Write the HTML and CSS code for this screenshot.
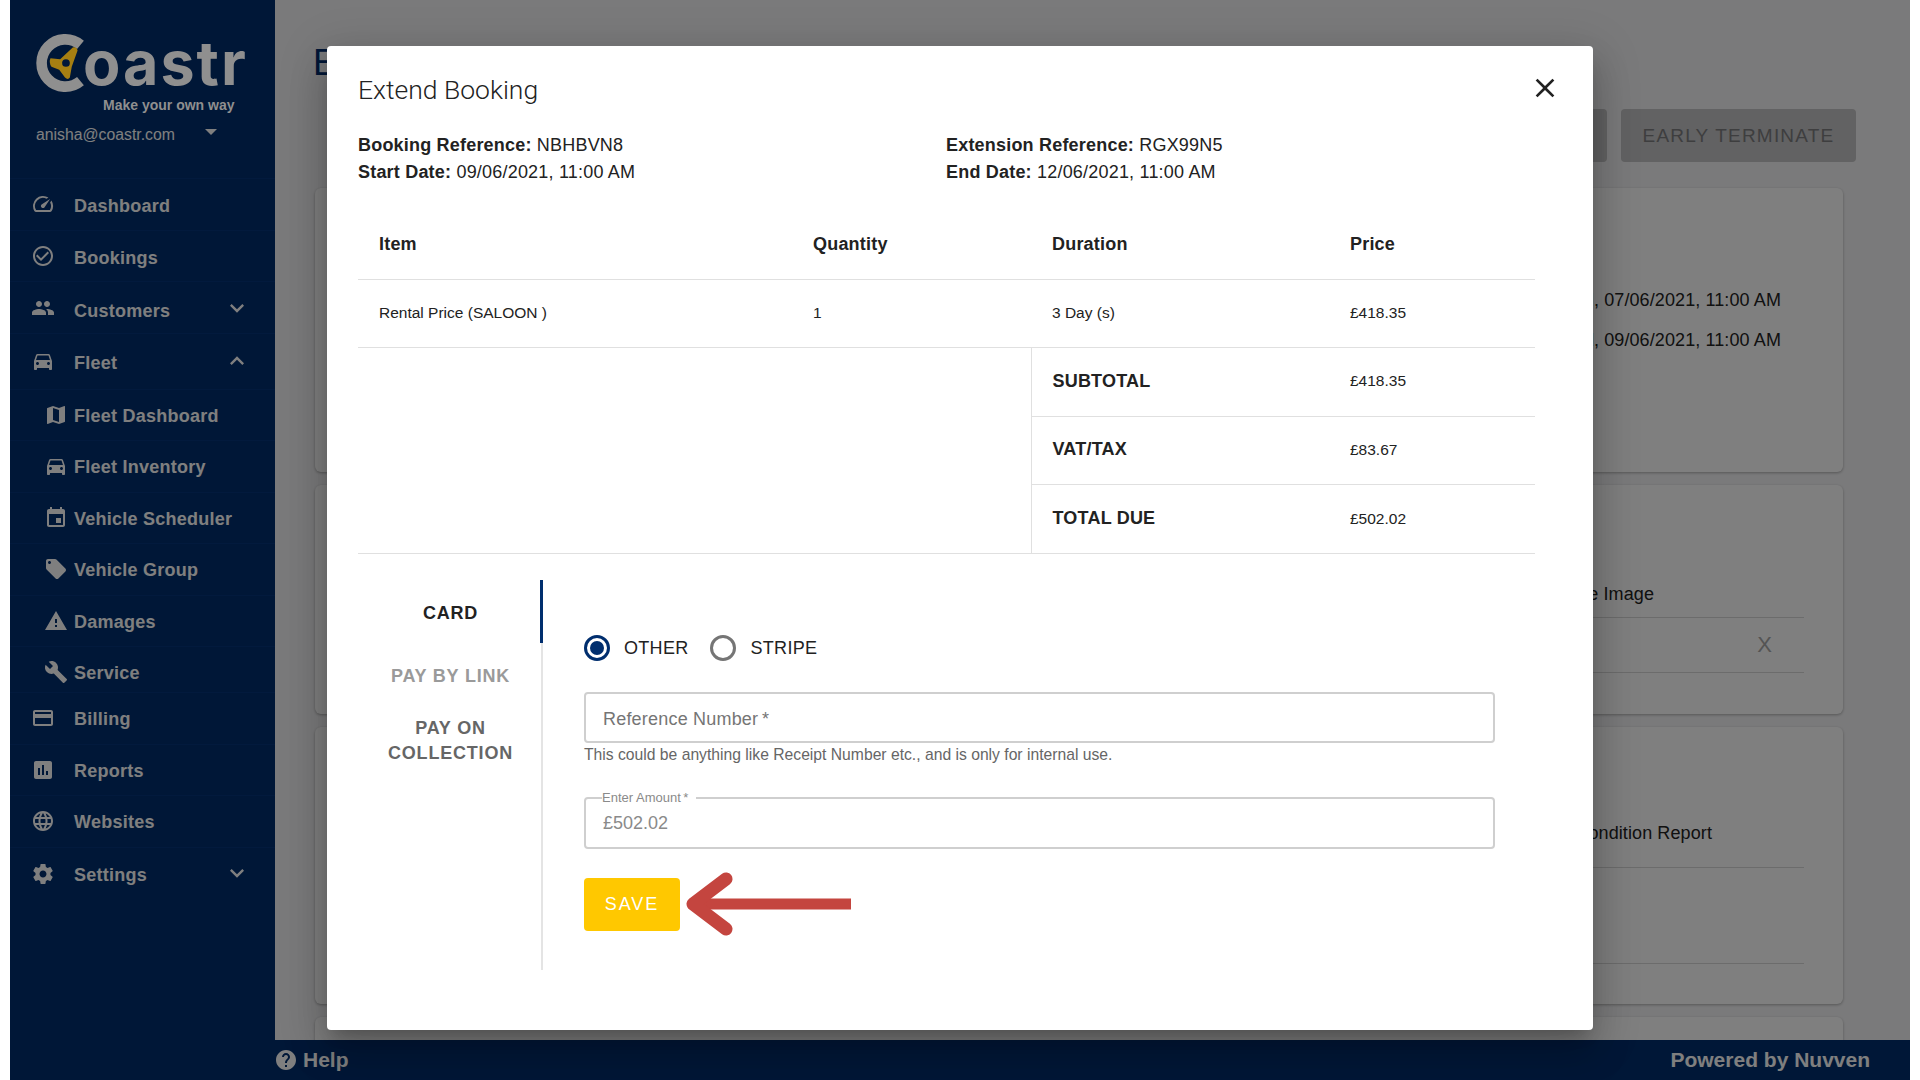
FILE: index.html
```html
<!DOCTYPE html>
<html lang="en">
<head>
    <meta charset="UTF-8">
    <title>Extend Booking</title>
    <link rel="stylesheet" href="styles.css">
</head>
<body>
    <svg class="sprite" xmlns="http://www.w3.org/2000/svg">
        <symbol id="i-speed" viewBox="0 0 24 24"><path d="M20.38 8.57l-1.23 1.85a8 8 0 0 1-.22 7.58H5.07A8 8 0 0 1 15.58 6.85l1.85-1.23A10 10 0 0 0 3.35 19a2 2 0 0 0 1.72 1h13.85a2 2 0 0 0 1.74-1 10 10 0 0 0-.27-10.44zm-9.79 6.84a2 2 0 0 0 2.83 0l5.66-8.49-8.49 5.66a2 2 0 0 0 0 2.83z"/></symbol>
        <symbol id="i-check" viewBox="0 0 24 24"><path d="M16.59 7.58L10 14.17l-3.59-3.58L5 12l5 5 8-8zM12 2C6.48 2 2 6.48 2 12s4.48 10 10 10 10-4.48 10-10S17.52 2 12 2zm0 18c-4.42 0-8-3.58-8-8s3.58-8 8-8 8 3.58 8 8-3.58 8-8 8z"/></symbol>
        <symbol id="i-people" viewBox="0 0 24 24"><path d="M16 11c1.66 0 2.99-1.34 2.99-3S17.66 5 16 5c-1.66 0-3 1.34-3 3s1.34 3 3 3zm-8 0c1.66 0 2.99-1.34 2.99-3S9.66 5 8 5C6.34 5 5 6.34 5 8s1.34 3 3 3zm0 2c-2.33 0-7 1.17-7 3.5V19h14v-2.5c0-2.33-4.67-3.5-7-3.5zm8 0c-.29 0-.62.02-.97.05 1.16.84 1.97 1.97 1.97 3.45V19h6v-2.5c0-2.33-4.67-3.5-7-3.5z"/></symbol>
        <symbol id="i-car" viewBox="0 0 24 24"><path d="M18.92 6.01C18.72 5.42 18.16 5 17.5 5h-11c-.66 0-1.21.42-1.42 1.01L3 12v8c0 .55.45 1 1 1h1c.55 0 1-.45 1-1v-1h12v1c0 .55.45 1 1 1h1c.55 0 1-.45 1-1v-8l-2.08-5.99zM6.5 16c-.83 0-1.5-.67-1.5-1.5S5.67 13 6.5 13s1.5.67 1.5 1.5S7.33 16 6.5 16zm11 0c-.83 0-1.5-.67-1.5-1.5s.67-1.5 1.5-1.5 1.5.67 1.5 1.5-.67 1.5-1.5 1.5zM5 11l1.5-4.5h11L19 11H5z"/></symbol>
        <symbol id="i-map" viewBox="0 0 24 24"><path d="M20.5 3l-.16.03L15 5.1 9 3 3.36 4.9c-.21.07-.36.25-.36.48V20.5c0 .28.22.5.5.5l.16-.03L9 18.9l6 2.1 5.64-1.9c.21-.07.36-.25.36-.48V3.5c0-.28-.22-.5-.5-.5zM15 19l-6-2.11V5l6 2.11V19z"/></symbol>
        <symbol id="i-event" viewBox="0 0 24 24"><path d="M17 12h-5v5h5v-5zM16 1v2H8V1H6v2H5c-1.11 0-1.99.9-1.99 2L3 19c0 1.1.89 2 2 2h14c1.1 0 2-.9 2-2V5c0-1.1-.9-2-2-2h-1V1h-2zm3 18H5V8h14v11z"/></symbol>
        <symbol id="i-tag" viewBox="0 0 24 24"><path d="M21.41 11.58l-9-9C12.05 2.22 11.55 2 11 2H4c-1.1 0-2 .9-2 2v7c0 .55.22 1.05.59 1.42l9 9c.36.36.86.58 1.41.58.55 0 1.05-.22 1.41-.59l7-7c.37-.36.59-.86.59-1.41 0-.55-.23-1.06-.59-1.42zM5.5 7C4.67 7 4 6.33 4 5.5S4.67 4 5.5 4 7 4.67 7 5.5 6.33 7 5.5 7z"/></symbol>
        <symbol id="i-warning" viewBox="0 0 24 24"><path d="M1 21h22L12 2 1 21zm12-3h-2v-2h2v2zm0-4h-2v-4h2v4z"/></symbol>
        <symbol id="i-build" viewBox="0 0 24 24"><path d="M22.7 19l-9.1-9.1c.9-2.3.4-5-1.5-6.9-2-2-5-2.4-7.4-1.3L9 6 6 9 1.6 4.7C.4 7.1.9 10.1 2.9 12.1c1.9 1.9 4.6 2.4 6.9 1.5l9.1 9.1c.4.4 1 .4 1.4 0l2.3-2.3c.5-.4.5-1.1.1-1.4z"/></symbol>
        <symbol id="i-card" viewBox="0 0 24 24"><path d="M20 4H4c-1.11 0-1.99.89-1.99 2L2 18c0 1.11.89 2 2 2h16c1.11 0 2-.89 2-2V6c0-1.11-.89-2-2-2zm0 14H4v-6h16v6zm0-10H4V6h16v2z"/></symbol>
        <symbol id="i-chart" viewBox="0 0 24 24"><path d="M19 3H5c-1.1 0-2 .9-2 2v14c0 1.1.9 2 2 2h14c1.1 0 2-.9 2-2V5c0-1.1-.9-2-2-2zM9 17H7v-7h2v7zm4 0h-2V7h2v10zm4 0h-2v-4h2v4z"/></symbol>
        <symbol id="i-globe" viewBox="0 0 24 24"><path d="M11.99 2C6.47 2 2 6.48 2 12s4.47 10 9.99 10C17.52 22 22 17.52 22 12S17.52 2 11.99 2zm6.93 6h-2.95c-.32-1.25-.78-2.45-1.38-3.56 1.84.63 3.37 1.91 4.33 3.56zM12 4.04c.83 1.2 1.48 2.53 1.91 3.96h-3.82c.43-1.43 1.08-2.76 1.91-3.96zM4.26 14C4.1 13.36 4 12.69 4 12s.1-1.36.26-2h3.38c-.08.66-.14 1.32-.14 2 0 .68.06 1.34.14 2H4.26zm.82 2h2.95c.32 1.25.78 2.45 1.38 3.56-1.84-.63-3.37-1.9-4.33-3.56zm2.95-8H5.08c.96-1.66 2.49-2.93 4.33-3.56C8.81 5.55 8.35 6.75 8.03 8zM12 19.96c-.83-1.2-1.48-2.53-1.91-3.96h3.82c-.43 1.43-1.08 2.76-1.91 3.96zM14.34 14H9.66c-.09-.66-.16-1.32-.16-2 0-.68.07-1.35.16-2h4.68c.09.65.16 1.32.16 2 0 .68-.07 1.34-.16 2zm.25 5.56c.6-1.11 1.06-2.31 1.38-3.56h2.95c-.96 1.65-2.49 2.93-4.33 3.56zM16.36 14c.08-.66.14-1.32.14-2 0-.68-.06-1.34-.14-2h3.38c.16.64.26 1.31.26 2s-.1 1.36-.26 2h-3.38z"/></symbol>
        <symbol id="i-gear" viewBox="0 0 24 24"><path d="M19.43 12.98c.04-.32.07-.64.07-.98s-.03-.66-.07-.98l2.11-1.65c.19-.15.24-.42.12-.64l-2-3.46c-.12-.22-.39-.3-.61-.22l-2.49 1c-.52-.4-1.08-.73-1.69-.98l-.38-2.65C14.46 2.18 14.25 2 14 2h-4c-.25 0-.46.18-.49.42l-.38 2.65c-.61.25-1.17.59-1.69.98l-2.49-1c-.23-.09-.49 0-.61.22l-2 3.46c-.13.22-.07.49.12.64l2.11 1.65c-.04.32-.07.65-.07.98s.03.66.07.98l-2.11 1.65c-.19.15-.24.42-.12.64l2 3.46c.12.22.39.3.61.22l2.49-1c.52.4 1.08.73 1.69.98l.38 2.65c.03.24.24.42.49.42h4c.25 0 .46-.18.49-.42l.38-2.65c.61-.25 1.17-.59 1.69-.98l2.49 1c.23.09.49 0 .61-.22l2-3.46c.12-.22.07-.49-.12-.64l-2.11-1.65zM12 15.5c-1.93 0-3.5-1.57-3.5-3.5s1.57-3.5 3.5-3.5 3.5 1.57 3.5 3.5-1.57 3.5-3.5 3.5z"/></symbol>
        <symbol id="i-help" viewBox="0 0 24 24"><path d="M12 2C6.48 2 2 6.48 2 12s4.48 10 10 10 10-4.48 10-10S17.52 2 12 2zm1 17h-2v-2h2v2zm2.07-7.75l-.9.92C13.45 12.9 13 13.5 13 15h-2v-.5c0-1.1.45-2.1 1.17-2.83l1.24-1.26c.37-.36.59-.86.59-1.41 0-1.1-.9-2-2-2s-2 .9-2 2H8c0-2.21 1.79-4 4-4s4 1.79 4 4c0 .88-.36 1.68-.93 2.25z"/></symbol>
        <symbol id="i-more" viewBox="0 0 24 24"><path d="M16.59 8.59L12 13.17 7.41 8.59 6 10l6 6 6-6z"/></symbol>
        <symbol id="i-less" viewBox="0 0 24 24"><path d="M12 8l-6 6 1.41 1.41L12 10.83l4.59 4.58L18 14z"/></symbol>
        <symbol id="i-close" viewBox="0 0 24 24"><path d="M19 6.41L17.59 5 12 10.59 6.41 5 5 6.41 10.59 12 5 17.59 6.41 19 12 13.41 17.59 19 19 17.59 13.41 12z"/></symbol>
    </svg>

    <div class="frame">
        <aside class="sidebar">
            <div class="brand">
                <div class="logo">
                    <svg class="logo_mark" viewBox="0 0 60 62">
                        <path class="logo_ring" d="M46 12.2 A24.5 24.5 0 1 0 46 49.8"/>
                        <path class="logo_wheel" d="M15 26 L25 27 L38 15 Q42 14 43 18 L37 35 L35 46 Q33 49 30 46 L24 38 L16 35 Q13 30 15 26z"/>
                        <circle class="logo_hole" cx="31" cy="31" r="4"/>
                    </svg>
                    <span class="logo_text">oastr</span>
                </div>
                <div class="tagline">Make your own way</div>
                <div class="account">
                    <span>anisha@coastr.com</span>
                    <span class="account_caret"></span>
                </div>
            </div>
            <nav class="nav">
                <a class="nav_item"><svg class="nav_icon"><use href="#i-speed"/></svg>Dashboard</a>
                <a class="nav_item"><svg class="nav_icon"><use href="#i-check"/></svg>Bookings</a>
                <a class="nav_item nav_low"><svg class="nav_icon"><use href="#i-people"/></svg>Customers<svg class="nav_chevron"><use href="#i-more"/></svg></a>
                <a class="nav_item nav_open"><svg class="nav_icon"><use href="#i-car"/></svg>Fleet<svg class="nav_chevron"><use href="#i-less"/></svg></a>
                <a class="nav_item nav_sub"><svg class="nav_icon"><use href="#i-map"/></svg>Fleet Dashboard</a>
                <a class="nav_item nav_sub"><svg class="nav_icon"><use href="#i-car"/></svg>Fleet Inventory</a>
                <a class="nav_item nav_sub"><svg class="nav_icon"><use href="#i-event"/></svg>Vehicle Scheduler</a>
                <a class="nav_item nav_sub"><svg class="nav_icon"><use href="#i-tag"/></svg>Vehicle Group</a>
                <a class="nav_item nav_sub"><svg class="nav_icon"><use href="#i-warning"/></svg>Damages</a>
                <a class="nav_item nav_sub nav_last"><svg class="nav_icon"><use href="#i-build"/></svg>Service</a>
                <a class="nav_item nav_flat"><svg class="nav_icon"><use href="#i-card"/></svg>Billing</a>
                <a class="nav_item nav_flat"><svg class="nav_icon"><use href="#i-chart"/></svg>Reports</a>
                <a class="nav_item nav_flat"><svg class="nav_icon"><use href="#i-globe"/></svg>Websites</a>
                <a class="nav_item nav_end"><svg class="nav_icon"><use href="#i-gear"/></svg>Settings<svg class="nav_chevron"><use href="#i-more"/></svg></a>
            </nav>
        </aside>

        <div class="main">
            <div class="content">
                <h1 class="page_title">E</h1>
                <div class="actions">
                    <button class="action_btn">EXTEND</button>
                    <button class="action_btn">EARLY TERMINATE</button>
                </div>
                <section class="card card_dates">
                    <p class="card_line">Started, 07/06/2021, 11:00 AM</p>
                    <p class="card_line">Ended, 09/06/2021, 11:00 AM</p>
                </section>
                <section class="card card_image">
                    <div class="card_row card_row_head">Vehicle Image</div>
                    <div class="card_row card_row_x">X</div>
                </section>
                <section class="card card_report">
                    <div class="card_row card_row_report">Vehicle Condition Report</div>
                    <div class="card_row card_row_empty"></div>
                </section>
                <section class="card card_more"></section>
            </div>
            <footer class="footer">
                <div class="footer_help"><svg class="footer_icon"><use href="#i-help"/></svg>Help</div>
                <div>Powered by Nuvven</div>
            </footer>
        </div>

        <div class="overlay">
            <div class="modal">
                <div class="modal_head">
                    <h2 class="modal_title">Extend Booking</h2>
                    <svg class="modal_close"><use href="#i-close"/></svg>
                </div>
                <div class="summary">
                    <div>
                        <p><b>Booking Reference:</b> NBHBVN8</p>
                        <p><b>Start Date:</b> 09/06/2021, 11:00 AM</p>
                    </div>
                    <div>
                        <p><b>Extension Reference:</b> RGX99N5</p>
                        <p><b>End Date:</b> 12/06/2021, 11:00 AM</p>
                    </div>
                </div>

                <table class="price_table">
                    <colgroup>
                        <col class="col_item"><col class="col_qty"><col class="col_dur"><col class="col_price">
                    </colgroup>
                    <thead>
                        <tr><th>Item</th><th>Quantity</th><th>Duration</th><th>Price</th></tr>
                    </thead>
                    <tbody>
                        <tr class="row_first"><td>Rental Price (SALOON )</td><td>1</td><td>3 Day (s)</td><td>£418.35</td></tr>
                        <tr><td class="blank" colspan="2" rowspan="3"></td><th>SUBTOTAL</th><td>£418.35</td></tr>
                        <tr><th>VAT/TAX</th><td>£83.67</td></tr>
                        <tr class="row_last"><th>TOTAL DUE</th><td>£502.02</td></tr>
                    </tbody>
                </table>

                <div class="payment">
                    <div class="tabs">
                        <div class="tab tab_active">CARD</div>
                        <div class="tab tab_muted">PAY BY LINK</div>
                        <div class="tab tab_double">PAY ON<br>COLLECTION</div>
                    </div>
                    <div class="pay_form">
                        <div class="radios">
                            <label class="radio_label"><span class="radio radio_on"></span>OTHER</label>
                            <label class="radio_label"><span class="radio"></span>STRIPE</label>
                        </div>
                        <div class="field">Reference Number&#8201;*</div>
                        <p class="field_help">This could be anything like Receipt Number etc., and is only for internal use.</p>
                        <fieldset class="field_amount">
                            <legend>Enter Amount&#8201;*</legend>
                            £502.02
                        </fieldset>
                        <div class="save_row">
                            <button class="save_btn">SAVE</button>
                            <svg class="arrow" viewBox="0 0 170 70">
                                <path d="M12 35H167" stroke-width="11" stroke-linecap="butt"/>
                                <path d="M42 10L9 35L42 60" stroke-width="13" stroke-linecap="round" stroke-linejoin="round"/>
                            </svg>
                        </div>
                    </div>
                </div>
            </div>
        </div>
    </div>
</body>
</html>
```

FILE: styles.css
```css
* {
    box-sizing: border-box;
}

body {
    margin: 0;
    background: #fff;
    font-family: "Liberation Sans", Arial, sans-serif;
    color: #222;
}

p, h1, h2 {
    margin: 0;
}

.sprite {
    display: none;
}

.frame {
    position: relative;
    display: flex;
    height: 1080px;
    margin: 0 10px;
    overflow: hidden;
}

/* sidebar */
.sidebar {
    width: 265px;
    flex-shrink: 0;
    background: #002e6e;
    color: #fff;
}

.brand {
    height: 178px;
    padding: 33px 0 0 26px;
}

.logo {
    position: relative;
    z-index: 2;
    display: flex;
    align-items: center;
    height: 60px;
    color: #8f8f8f;
}

.logo_mark {
    width: 58px;
    height: 60px;
    flex-shrink: 0;
}

.logo_ring {
    fill: none;
    stroke: #8f8f8f;
    stroke-width: 11;
}

.logo_wheel {
    fill: #a67f12;
}

.logo_hole {
    fill: #00173a;
}

.logo_text {
    margin: 0 0 0 -11px;
    font-family: Inter, sans-serif;
    font-size: 61px;
    font-weight: 700;
    letter-spacing: 2px;
    line-height: 60px;
}

.tagline {
    position: relative;
    z-index: 2;
    margin: 3px 0 0 67px;
    color: #8f8f8f;
    font-size: 14px;
    font-weight: 700;
    line-height: 18px;
}

.account {
    display: flex;
    align-items: center;
    margin-top: 11px;
    font-size: 15.8px;
    line-height: 20px;
}

.account_caret {
    width: 0;
    height: 0;
    margin: -6px 0 0 30px;
    border-left: 6px solid transparent;
    border-right: 6px solid transparent;
    border-top: 6px solid #fff;
}

.nav_item {
    display: flex;
    align-items: center;
    height: 51.5px;
    padding: 5px 0 0 21px;
    border-top: 1px solid #04357a;
    font-size: 18px;
    font-weight: 700;
    letter-spacing: 0.25px;
}

.nav_low {
    padding-top: 8px;
}

.nav_open {
    height: 56px;
}

.nav_sub {
    padding: 3px 0 0 34px;
}

.nav_last {
    height: 46px;
    padding-top: 7px;
}

.nav_flat {
    padding-top: 3px;
}

.nav_end {
    height: 56px;
    padding-top: 1px;
}

.nav_icon {
    width: 24px;
    height: 24px;
    margin-right: 19px;
    margin-top: -5px;
    fill: currentColor;
    flex-shrink: 0;
}

.nav_low .nav_icon {
    margin-top: -7px;
}

.nav_sub .nav_icon,
.nav_flat .nav_icon {
    margin-top: -3px;
}

.nav_sub .nav_icon {
    margin-right: 6px;
}

.nav_end .nav_icon {
    margin-top: -3px;
}

.nav_chevron {
    width: 28px;
    height: 28px;
    margin: -6px 24px 0 auto;
    fill: currentColor;
}

/* page behind the dialog */
.main {
    flex: 1;
    display: flex;
    flex-direction: column;
    min-width: 0;
    background: #f5f5f7;
}

.content {
    flex: 1;
    min-height: 0;
    overflow: hidden;
    padding: 41px 54px 0 40px;
}

.page_title {
    height: 68px;
    margin-left: -2px;
    color: #002e6e;
    font-size: 36px;
    font-weight: 400;
    line-height: 44px;
}

.actions {
    display: flex;
    justify-content: flex-end;
    gap: 14px;
    margin-bottom: 26px;
}

.action_btn {
    width: 235px;
    height: 53px;
    border: 0;
    border-radius: 4px;
    background: #c4c4c6;
    color: #7c7c7e;
    font-family: "Liberation Sans", Arial, sans-serif;
    font-size: 19px;
    letter-spacing: 1.2px;
}

.card {
    margin: 0 13px 13px 0;
    padding: 0 39px;
    border-radius: 6px;
    background: #fff;
    box-shadow: 0 1px 3px rgba(0, 0, 0, 0.3);
    font-size: 18px;
    letter-spacing: 0.1px;
    color: #222;
}

.card_dates {
    height: 284px;
    padding: 92px 62px 0 39px;
}

.card_line {
    height: 40px;
    line-height: 40px;
    text-align: right;
}

.card_image {
    height: 229px;
    padding-top: 85px;
}

.card_report {
    height: 277px;
    padding-top: 69px;
}

.card_more {
    height: 100px;
}

.card_row {
    display: flex;
    align-items: center;
    justify-content: flex-end;
    border-bottom: 1px solid #d8d8d8;
}

.card_row_head {
    height: 48px;
    padding: 2px 150px 0 0;
}

.card_row_x {
    height: 55px;
    padding-right: 32px;
    color: #a8a8a8;
    font-size: 22px;
}

.card_row_report {
    height: 72px;
    padding: 4px 92px 0 0;
}

.card_row_empty {
    height: 96px;
}

.footer {
    display: flex;
    justify-content: space-between;
    align-items: center;
    height: 40px;
    padding: 0 40px 0 0;
    background: #002e6e;
    color: #fff;
    font-size: 21px;
    font-weight: 700;
}

.footer_help {
    display: flex;
    align-items: center;
    gap: 5px;
    margin-left: -1px;
}

.footer_icon {
    width: 24px;
    height: 24px;
    fill: currentColor;
}

/* dialog */
.overlay {
    position: absolute;
    inset: 0;
    z-index: 1;
    padding: 46px 0 0 317px;
    background: rgba(0, 0, 0, 0.5);
}

.modal {
    width: 1266px;
    height: 984px;
    padding: 0 58px 0 31px;
    border-radius: 4px;
    background: #fff;
    box-shadow: 0 11px 15px -7px rgba(0, 0, 0, 0.2), 0 24px 38px 3px rgba(0, 0, 0, 0.14), 0 9px 46px 8px rgba(0, 0, 0, 0.12);
}

.modal_head {
    display: flex;
    justify-content: space-between;
    align-items: center;
    padding-top: 27px;
}

.modal_title {
    font-family: Roboto, sans-serif;
    font-size: 26.5px;
    font-weight: 300;
    line-height: 34px;
}

.modal_close {
    width: 32px;
    height: 32px;
    margin-right: -26px;
    margin-top: -4px;
    fill: #222;
}

.summary {
    display: grid;
    grid-template-columns: 588px 1fr;
    margin-top: 25px;
    font-size: 18px;
    letter-spacing: 0.2px;
    line-height: 27px;
}

.price_table {
    width: 1177px;
    margin-top: 25px;
    border-collapse: collapse;
    table-layout: fixed;
}

.col_item { width: 434px; }
.col_qty { width: 239px; }
.col_dur { width: 298px; }
.col_price { width: 206px; }

.price_table th,
.price_table td {
    height: 68.5px;
    padding: 0 0 1px 21px;
    border-bottom: 1px solid #e0e0e0;
    text-align: left;
    font-size: 15.5px;
    font-weight: 400;
}

.price_table th {
    font-size: 18px;
    font-weight: 700;
    letter-spacing: 0.2px;
}

.price_table .row_first td {
    height: 68px;
}

.price_table .row_last th,
.price_table .row_last td {
    height: 69px;
}

.price_table .blank {
    border-right: 1px solid #e0e0e0;
}

.payment {
    display: flex;
    height: 390px;
    margin-top: 26px;
}

.tabs {
    width: 185px;
    border-right: 2px solid #e4e4e4;
    text-align: center;
    font-size: 18px;
    font-weight: 700;
    letter-spacing: 0.8px;
    line-height: 25px;
    color: #666;
}

.tab {
    display: flex;
    align-items: center;
    justify-content: center;
    height: 63px;
    margin-right: -2px;
    padding-top: 4px;
}

.tab_active {
    padding-left: 3px;
    border-right: 3px solid #002e6e;
    color: #222;
}

.tab_muted {
    color: #9a9a9a;
}

.tab_double {
    height: 66px;
}

.pay_form {
    width: 952px;
    padding-left: 41px;
}

.radios {
    display: flex;
    gap: 21px;
    margin-top: 52px;
    height: 32px;
}

.radio_label {
    display: flex;
    align-items: center;
    gap: 14px;
    font-size: 18px;
    letter-spacing: 0.3px;
}

.radio_label:last-child {
    gap: 15px;
}

.radio {
    display: flex;
    align-items: center;
    justify-content: center;
    width: 26px;
    height: 26px;
    border: 3px solid #757575;
    border-radius: 50%;
}

.radio_on {
    border-color: #002e6e;
}

.radio_on::after {
    content: "";
    width: 14px;
    height: 14px;
    border-radius: 50%;
    background: #002e6e;
}

.field {
    display: flex;
    align-items: center;
    width: 911px;
    height: 51px;
    margin-top: 28px;
    padding: 3px 17px 0;
    border: 2px solid #cfcfcf;
    border-radius: 4px;
    color: #757575;
    font-size: 18px;
    letter-spacing: 0.2px;
}

.field_help {
    margin-top: 3px;
    color: #666;
    font-size: 15.7px;
    line-height: 18px;
}

.field_amount {
    width: 911px;
    height: 58px;
    margin: 27px 0 0;
    padding: 0 0 0 17px;
    border: 2px solid #cfcfcf;
    border-radius: 4px;
    color: #8a8a8a;
    font-size: 18px;
    line-height: 36px;
}

.field_amount legend {
    margin-left: -1px;
    padding: 0 8px 0 0;
    color: #8a8a8a;
    font-size: 13px;
    line-height: 14px;
}

.save_row {
    display: flex;
    align-items: center;
    margin-top: 20px;
}

.save_btn {
    width: 96px;
    height: 53px;
    border: 0;
    border-radius: 4px;
    background: #ffc800;
    color: #fff;
    font-family: "Liberation Sans", Arial, sans-serif;
    font-size: 18px;
    letter-spacing: 2px;
}

.arrow {
    width: 170px;
    height: 70px;
    margin-left: 4px;
    fill: none;
    stroke: #c4453f;
}
```
